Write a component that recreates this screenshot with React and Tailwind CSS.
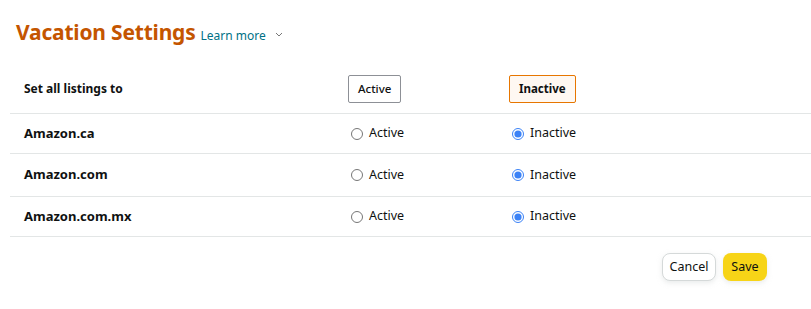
import React, { useState } from 'react';

const marketplaces = [
  { id: 'ca', name: 'Amazon.ca', h: 'h-[40px]' },
  { id: 'com', name: 'Amazon.com', h: 'h-[43px]' },
  { id: 'mx', name: 'Amazon.com.mx', h: 'h-[40px]' },
];

const Radio = ({ checked, onChange, label }) => (
  <label className="flex items-center gap-[6px] ml-[3px] cursor-pointer text-[12.5px] text-[#0f1111]">
    <input
      type="radio"
      checked={checked}
      onChange={onChange}
      className="w-[12px] h-[12px] m-0 accent-[#3b82f6]"
    />
    {label}
  </label>
);

export default function App() {
  const [status, setStatus] = useState({ ca: 'inactive', com: 'inactive', mx: 'inactive' });
  const [all, setAll] = useState('inactive');

  const setAllTo = (v) => {
    setAll(v);
    setStatus({ ca: v, com: v, mx: v });
  };

  return (
    <div className="w-[811px] h-[309px] bg-white font-['Noto_Sans',sans-serif] text-[#0f1111]">
      <div className="flex items-baseline pl-[16px] pt-[17px] h-[60px]">
        <h1 className="text-[21px] font-bold text-[#c45500] tracking-[-0.2px]">Vacation Settings</h1>
        <a href="#" className="ml-[5px] text-[12px] text-[#007185]">Learn more</a>
        <svg width="8" height="5" viewBox="0 0 8 5" className="ml-[9px] relative -top-[3px]">
          <path d="M1 1l3 3 3-3" fill="none" stroke="#777" strokeWidth="1" />
        </svg>
      </div>

      <div className="ml-[10px]">
        <div className="grid grid-cols-[338px_161px_1fr] h-[54px] border-b border-[#e3e6e6]">
          <div className="pl-[14px] pt-[20px] text-[12px] font-bold">Set all listings to</div>
          <div className="pt-[15px]">
            <button
              onClick={() => setAllTo('active')}
              className={`h-[28px] px-[9px] text-[11.5px] rounded-[2px] border ${all === 'active' ? 'border-[#e77600] bg-[#fef8f2] font-bold' : 'border-[#8d9096] bg-white font-medium'}`}
            >
              Active
            </button>
          </div>
          <div className="pt-[15px]">
            <button
              onClick={() => setAllTo('inactive')}
              className={`h-[28px] px-[9px] text-[11.5px] rounded-[2px] border ${all === 'inactive' ? 'border-[#e77600] bg-[#fef8f2] font-bold' : 'border-[#8d9096] bg-white font-medium'}`}
            >
              Inactive
            </button>
          </div>
        </div>

        {marketplaces.map((m) => (
          <div key={m.id} className={`grid grid-cols-[338px_161px_1fr] items-center ${m.h} border-b border-[#e3e6e6]`}>
            <div className="pl-[14px] text-[13px] font-bold">{m.name}</div>
            <Radio
              checked={status[m.id] === 'active'}
              onChange={() => setStatus({ ...status, [m.id]: 'active' })}
              label="Active"
            />
            <Radio
              checked={status[m.id] === 'inactive'}
              onChange={() => setStatus({ ...status, [m.id]: 'inactive' })}
              label="Inactive"
            />
          </div>
        ))}
      </div>

      <div className="flex justify-end gap-[7px] pr-[44px] pt-[16px]">
        <button className="h-[28px] w-[54px] text-[12.5px] rounded-[8px] border border-[#d5d9d9] bg-white shadow-[0_2px_5px_rgba(213,217,217,0.5)]">
          Cancel
        </button>
        <button className="h-[28px] w-[44px] text-[12.5px] rounded-[8px] bg-[#f7d417] shadow-[0_2px_5px_rgba(213,217,217,0.5)]">
          Save
        </button>
      </div>
    </div>
  );
}
